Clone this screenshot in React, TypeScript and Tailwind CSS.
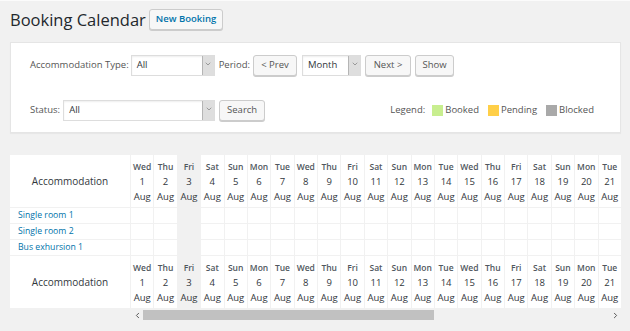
import { ChevronDown, ChevronLeft, ChevronRight } from 'lucide-react';

const dayNames = ['Wed', 'Thu', 'Fri', 'Sat', 'Sun', 'Mon', 'Tue'];
const days = Array.from({ length: 21 }, (_, i) => i + 1);
const rooms = ['Single room 1', 'Single room 2', 'Bus exhursion 1'];

const Button = ({
  children,
  className = '',
  color = 'text-[#555555]',
}: {
  children: React.ReactNode;
  className?: string;
  color?: string;
}) => (
  <div
    className={`h-[21px] flex items-center justify-center rounded-[3px] border border-[#cccccc] bg-[#f7f7f7] shadow-[0_1px_0_#cccccc] ${color} ${className}`}
  >
    {children}
  </div>
);

const Select = ({ value, width }: { value: string; width: string }) => (
  <div className={`h-[21px] flex items-stretch border border-[#dddddd] bg-white shadow-[inset_0_1px_2px_rgba(0,0,0,0.07)] ${width}`}>
    <span className="flex-1 pl-[5px] flex items-center text-[#32373c]">{value}</span>
    <span className="w-[12px] bg-[#dedede] border-l border-[#b5b5b5] flex items-start justify-center pt-[4px]">
      <ChevronDown size={8} strokeWidth={1.5} className="text-[#555555]" />
    </span>
  </div>
);

const HeaderCell = ({ day }: { day: number }) => (
  <div
    className={`h-[52px] flex flex-col items-center justify-center leading-[15px] ${day === 3 ? 'bg-[#f1f1f1]' : 'bg-white'}`}
  >
    <span className="text-[8.5px] font-semibold text-[#50575e]">{dayNames[(day - 1) % 7]}</span>
    <span className="text-[9.5px] text-[#32373c]">{day}</span>
    <span className="text-[9.5px] text-[#32373c]">Aug</span>
  </div>
);

const LegendItem = ({ color, label }: { color: string; label: string }) => (
  <div className="flex items-center gap-[2px]">
    <span className={`w-[11px] h-[11px] ${color}`} />
    <span>{label}</span>
  </div>
);

export default function App() {
  return (
    <div className="min-h-[331px] bg-[#f1f1f1] pl-[10px] pr-[9px] pt-[8px] font-['Open_Sans',sans-serif] border-t border-[#fbfbfb]">
      <div className="flex items-center gap-[3px] h-[21px]">
        <h1 className="text-[16.5px] leading-[21px] text-[#23282d]">Booking Calendar</h1>
        <Button className="px-[6px] font-semibold text-[9.5px]" color="text-[#0073aa]">
          New Booking
        </Button>
      </div>

      <div className="mt-[12px] bg-white border border-[#e5e5e5] shadow-[0_1px_1px_rgba(0,0,0,0.04)] pl-[19px] pr-[26px] pt-[12px] pb-[11px] text-[9.5px] text-[#555555]">
        <div className="flex items-center">
          <span>Accommodation Type:</span>
          <Select value="All" width="w-[84px] ml-[2px]" />
          <span className="ml-[4px]">Period:</span>
          <Button className="ml-[3px] w-[44px]">&lt; Prev</Button>
          <Select value="Month" width="w-[59px] ml-[5px]" />
          <Button className="ml-[4px] w-[46px]">Next &gt;</Button>
          <Button className="ml-[4px] w-[39px]">Show</Button>
        </div>
        <div className="flex items-center justify-between mt-[24px]">
          <div className="flex items-center">
            <span>Status:</span>
            <Select value="All" width="w-[152px] ml-[3px]" />
            <Button className="ml-[4px] w-[46px]">Search</Button>
          </div>
          <div className="flex items-center gap-[9px]">
            <span className="mr-[-2px]">Legend:</span>
            <LegendItem color="bg-[#c8ee8f]" label="Booked" />
            <LegendItem color="bg-[#ffcf48]" label="Pending" />
            <LegendItem color="bg-[#a9a9a9]" label="Blocked" />
          </div>
        </div>
      </div>

      <div className="mt-[22px] flex items-start gap-px">
        <div className="w-[120px] shrink-0 flex flex-col gap-px">
          <div className="h-[52px] bg-white flex items-center justify-center text-[10px] text-[#32373c]">Accommodation</div>
          {rooms.map(room => (
            <div key={room} className="h-[15px] bg-white pl-[8px] flex items-center text-[8.7px] text-[#0073aa]">
              {room}
            </div>
          ))}
          <div className="h-[52px] bg-white flex items-center justify-center text-[10px] text-[#32373c]">Accommodation</div>
        </div>

        <div className="flex-1 min-w-0">
          <div className="flex gap-px">
            {days.map(day => (
              <div key={day} className="flex-1 min-w-0 flex flex-col gap-px">
                <HeaderCell day={day} />
                {rooms.map(room => (
                  <div key={room} className={`h-[15px] ${day === 3 ? 'bg-[#f1f1f1]' : 'bg-white'}`} />
                ))}
                <HeaderCell day={day} />
              </div>
            ))}
          </div>
          <div className="mt-[2px] h-[10px] flex items-center">
            <span className="w-[12px] flex justify-center">
              <ChevronLeft size={9} strokeWidth={2.5} className="text-[#505050]" />
            </span>
            <div className="flex-1 h-[10px] pr-[175px]">
              <div className="h-full bg-[#c1c1c1]" />
            </div>
            <span className="w-[12px] flex justify-center">
              <ChevronRight size={9} strokeWidth={2.5} className="text-[#505050]" />
            </span>
          </div>
        </div>
      </div>
    </div>
  );
}
